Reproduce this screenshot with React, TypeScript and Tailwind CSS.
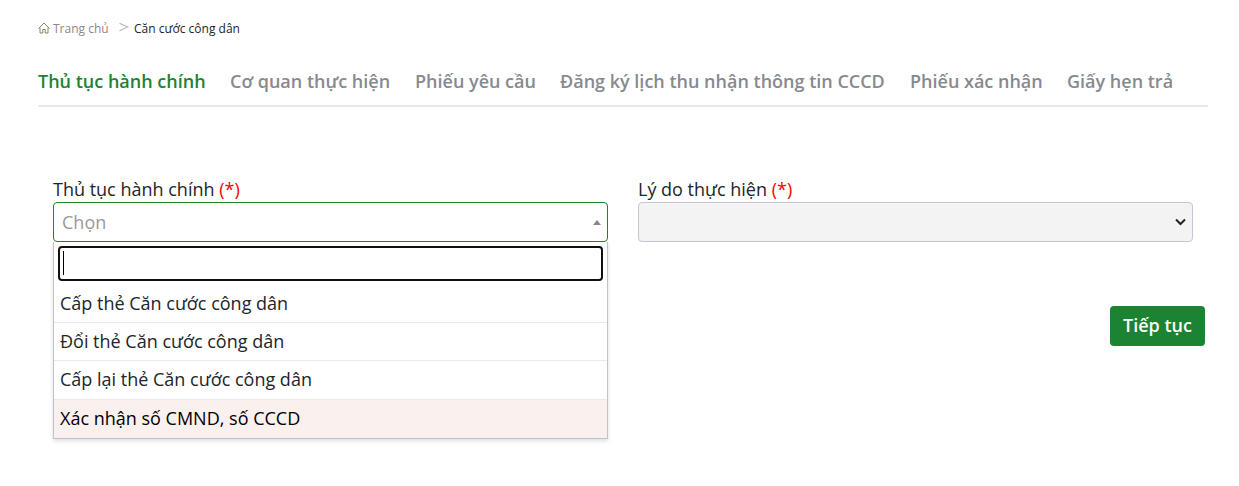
const tabs = [
  { label: 'Thủ tục hành chính', width: 'w-[192px]' },
  { label: 'Cơ quan thực hiện', width: 'w-[185px]' },
  { label: 'Phiếu yêu cầu', width: 'w-[145px]' },
  { label: 'Đăng ký lịch thu nhận thông tin CCCD', width: 'w-[350px]' },
  { label: 'Phiếu xác nhận', width: 'w-[157px]' },
  { label: 'Giấy hẹn trả', width: 'w-[110px]' },
];

const options = [
  { label: 'Cấp thẻ Căn cước công dân', row: 'h-[39px] border-b leading-[39px]' },
  { label: 'Đổi thẻ Căn cước công dân', row: 'h-[38px] border-b leading-[37px]' },
  { label: 'Cấp lại thẻ Căn cước công dân', row: 'h-[39px] border-b leading-[37px]' },
  { label: 'Xác nhận số CMND, số CCCD', row: 'h-[38px] bg-[#faf0ee] leading-[37px] text-black' },
];

function Label({ text }: { text: string }) {
  return (
    <label className="block h-[26px] whitespace-nowrap text-[18px] leading-[26px] text-[#212529]">
      {text} <span className="text-[#f00]">(*)</span>
    </label>
  );
}

export default function App() {
  return (
    <div className="h-[486px] w-full overflow-hidden bg-white pl-[38px] pr-[31px] pt-[19px] font-['Open_Sans',sans-serif] text-[#212529]">
      <nav className="flex h-5 items-center whitespace-nowrap text-[12px] leading-5">
        <svg className="mb-[3px] mr-[3px] h-3 w-3" viewBox="0 0 12 12" fill="none" stroke="#6f7d55" strokeWidth=".9">
          <path d="M.5 6.500 6 1l5.500 5.500M2 5.500V11h2.800V7.500h2.400V11H10V5.500" />
        </svg>
        <a className="w-[66px] text-[#888]">Trang chủ</a>
        <svg className="mb-1 mr-[5px] h-2.5 w-[10px]" viewBox="0 0 10 10" fill="none" stroke="#b5b5b5" strokeWidth="1.100">
          <path d="m.5 1.200 8.300 3.800L.5 8.800" />
        </svg>
        <span>Căn cước công dân</span>
      </nav>
      <div className="mt-[19px] flex h-[49px] whitespace-nowrap border-b-2 border-[#e6e8eb] text-[18px] font-semibold leading-[46px]">
        {tabs.map((t, i) => (
          <a key={t.label} className={`${t.width} shrink-0 ${i === 0 ? 'text-[#1b8332]' : 'text-[#868a8e]'}`}>
            {t.label}
          </a>
        ))}
      </div>
      <main className="mt-[69px] flex gap-[30px] pl-[15px]">
        <div className="w-[555px]">
          <Label text="Thủ tục hành chính" />
          <div className="flex h-10 items-center justify-between rounded border border-[#1b8332] px-2 text-[18px] text-[#999]">
            Chọn
            <svg className="mr-[-2px] h-[5px] w-2" viewBox="0 0 8 5" fill="#888">
              <path d="m0 5 4-5 4 5z" />
            </svg>
          </div>
          <div className="h-[197px] border border-t-0 border-[#bfc3d0] shadow-[0_2px_4px_#0002]">
            <div className="p-1 pb-[3px]">
              <div className="h-[35px] rounded-[4px] border-2 border-[#101010] px-[3px] py-[3px]">
                <div className="h-6 w-px bg-black" />
              </div>
            </div>
            {options.map((o) => (
              <div key={o.label} className={`border-[#e9e9ed] px-[6px] text-[18px] ${o.row}`}>
                {o.label}
              </div>
            ))}
          </div>
        </div>
        <div className="w-[555px]">
          <Label text="Lý do thực hiện" />
          <div className="flex h-10 items-center justify-end rounded border border-[#c5c8d2] bg-[#f3f3f3] pr-[6px]">
            <svg className="h-2 w-[11px]" viewBox="0 0 11 8" fill="none" stroke="#222" strokeWidth="2">
              <path d="m1 1.500 4.500 4.500L10 1.500" />
            </svg>
          </div>
          <div className="mr-[-12px] flex justify-end pt-16">
            <button className="h-10 w-[95px] rounded-[4px] bg-[#1b8332] pb-[2px] text-[18px] font-semibold text-white">
              Tiếp tục
            </button>
          </div>
        </div>
      </main>
    </div>
  );
}
